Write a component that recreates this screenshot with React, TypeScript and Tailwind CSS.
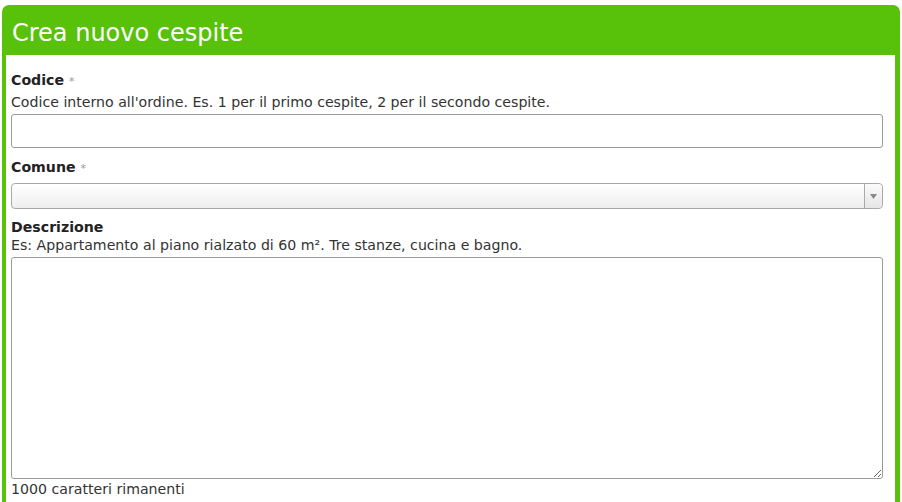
export default function App() {
  return (
    <div className="w-[902px] h-[502px] overflow-hidden bg-white pt-[5px] px-[2px] font-['DejaVu_Sans',sans-serif]">
      <div className="w-[898px] rounded-t-[7px] bg-[#58c10a]">
        {/* Header */}
        <div className="h-[50px] pl-[10px] flex items-center">
          <h1 className="text-white text-[24px] leading-none pt-[6px]">Crea nuovo cespite</h1>
        </div>

        {/* Body */}
        <div className="ml-[4px] mr-[5px] bg-white pl-[5px] pr-[12px] pt-[17px] pb-[20px] text-[14.15px] leading-[17px] text-[#333]">
          <label className="block font-bold text-[#222]">
            Codice <span className="font-normal text-[#999] text-[11px]">*</span>
          </label>
          <p className="mt-[4px]">
            Codice interno all'ordine. Es. 1 per il primo cespite, 2 per il secondo cespite.
          </p>
          <input
            type="text"
            className="mt-[3px] block w-full h-[34px] rounded-[3px] border border-[#9a9a9a] bg-white px-2 outline-none"
          />

          <label className="block mt-[11px] font-bold text-[#222]">
            Comune <span className="font-normal text-[#999] text-[11px]">*</span>
          </label>
          <div className="mt-[6px] flex h-[26px] w-full rounded-[4px] border border-[#aaa] bg-gradient-to-b from-white to-[#eeeeee]">
            <div className="flex-1" />
            <div className="w-[18px] border-l border-[#aaa] flex items-center justify-center bg-gradient-to-b from-[#fafafa] to-[#e6e6e6] rounded-r-[4px]">
              <svg width="7" height="5" viewBox="0 0 7 5">
                <path d="M0 0 H7 L3.5 5 Z" fill="#888" />
              </svg>
            </div>
          </div>

          <label className="block mt-[10px] font-bold text-[#222]">Descrizione</label>
          <p className="mt-[1px]">
            Es: Appartamento al piano rialzato di 60 m². Tre stanze, cucina e bagno.
          </p>
          <textarea className="mt-[3px] block w-full h-[222px] rounded-[3px] border border-[#9a9a9a] bg-white outline-none resize" />
          <p className="mt-[2px]">1000 caratteri rimanenti</p>
        </div>
      </div>
    </div>
  );
}
